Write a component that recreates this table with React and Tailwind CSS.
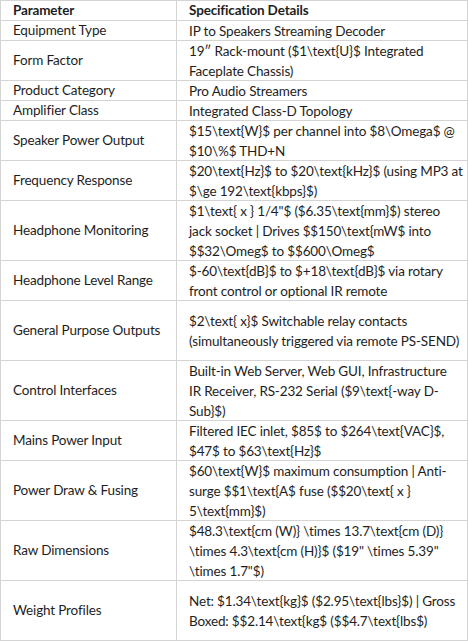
const rows = [
  { name: "Equipment Type", h: "h-[20px]", lines: ["IP to Speakers Streaming Decoder"] },
  { name: "Form Factor", h: "h-[40px]", lines: ["19″ Rack-mount ($1\\text{U}$ Integrated", "Faceplate Chassis)"] },
  { name: "Product Category", h: "h-[20px]", lines: ["Pro Audio Streamers"] },
  { name: "Amplifier Class", h: "h-[20px]", lines: ["Integrated Class-D Topology"] },
  { name: "Speaker Power Output", h: "h-[40px]", lines: ["$15\\text{W}$ per channel into $8\\Omega$ @", "$10\\%$ THD+N"] },
  { name: "Frequency Response", h: "h-[40px]", lines: ["$20\\text{Hz}$ to $20\\text{kHz}$ (using MP3 at", "$\\ge 192\\text{kbps}$)"] },
  {
    name: "Headphone Monitoring",
    h: "h-[60px]",
    lines: ["$1\\text{ x } 1/4\"$ ($6.35\\text{mm}$) stereo", "jack socket | Drives $$150\\text{mW$ into", "$$32\\Omeg$ to $$600\\Omeg$"],
  },
  { name: "Headphone Level Range", h: "h-[40px]", lines: ["$-60\\text{dB}$ to $+18\\text{dB}$ via rotary", "front control or optional IR remote"] },
  {
    name: "General Purpose Outputs",
    h: "h-[60px]",
    lines: ["$2\\text{ x}$ Switchable relay contacts", "(simultaneously triggered via remote PS-SEND)"],
  },
  {
    name: "Control Interfaces",
    h: "h-[60px]",
    lines: ["Built-in Web Server, Web GUI, Infrastructure", "IR Receiver, RS-232 Serial ($9\\text{-way D-", "Sub}$)"],
  },
  { name: "Mains Power Input", h: "h-[40px]", lines: ["Filtered IEC inlet, $85$ to $264\\text{VAC}$,", "$47$ to $63\\text{Hz}$"] },
  {
    name: "Power Draw & Fusing",
    h: "h-[60px]",
    lines: ["$60\\text{W}$ maximum consumption | Anti-", "surge $$1\\text{A$ fuse ($$20\\text{ x }", "5\\text{mm}$)"],
  },
  {
    name: "Raw Dimensions",
    h: "h-[60px]",
    lines: ["$48.3\\text{cm (W)} \\times 13.7\\text{cm (D)}", "\\times 4.3\\text{cm (H)}$ ($19\" \\times 5.39\"", "\\times 1.7\"$)"],
  },
  {
    name: "Weight Profiles",
    h: "h-[60px]",
    lines: ["Net: $1.34\\text{kg}$ ($2.95\\text{lbs}$) | Gross", "Boxed: $$2.14\\text{kg$ ($$4.7\\text{lbs$)"],
  },
];

export default function App() {
  return (
    <div className="bg-white w-[469px] h-[641px] overflow-hidden" style={{ fontFamily: "Lato, 'Open Sans', sans-serif" }}>
      <table className="w-[468px] border-collapse table-fixed text-[13.5px] tracking-[-0.15px] leading-[19px] text-[#1e1e1e]">
        <colgroup>
          <col className="w-[176px]" />
          <col />
        </colgroup>
        <thead>
          <tr className="h-[20px]">
            <th className="border border-[#d4d4d4] pl-3 pr-0 py-0 text-left font-bold">Parameter</th>
            <th className="border border-[#d4d4d4] pl-3 pr-0 py-0 text-left font-bold">Specification Details</th>
          </tr>
        </thead>
        <tbody>
          {rows.map((r) => (
            <tr key={r.name} className={r.h}>
              <td className="border border-[#d4d4d4] pl-3 pr-0 py-0 align-middle whitespace-nowrap">{r.name}</td>
              <td className="border border-[#d4d4d4] pl-3 pr-0 py-0 align-middle">
                <div className="flex flex-col justify-center" style={{ height: r.lines.length * 19 }}>
                  {r.lines.map((l, i) => (
                    <div key={i} className="whitespace-nowrap leading-5 shrink-0">
                      {l}
                    </div>
                  ))}
                </div>
              </td>
            </tr>
          ))}
        </tbody>
      </table>
    </div>
  );
}
